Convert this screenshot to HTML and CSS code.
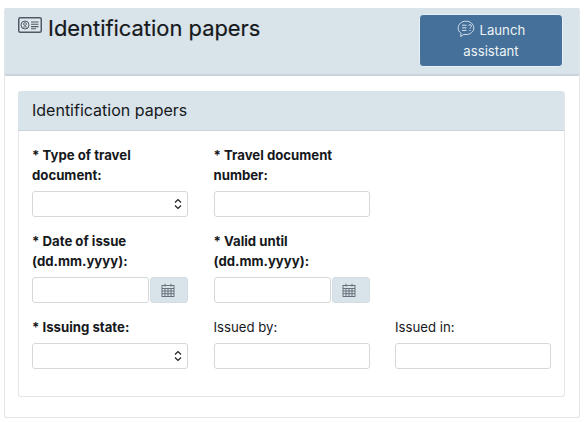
FILE: index.html
```html
<!DOCTYPE html>
<html lang="en">
<head>
  <meta charset="UTF-8" />
  <title>Identification papers</title>
  <link rel="stylesheet" href="styles.css">
</head>
<body>
  <div class="page-card">
    <div class="page-header">
      <h1>
        <svg class="id-icon" viewBox="0 0 24 16" width="24" height="16" fill="none" stroke="#4f5a66">
          <rect x="0.75" y="0.75" width="22.5" height="14.5" rx="1.5" stroke-width="1.5" fill="#dfe7ed"/>
          <circle cx="7" cy="8" r="4" stroke-width="1"/>
          <circle cx="7" cy="7" r="1.4" stroke-width="0.9"/>
          <path d="M4.5 10.8c.6-1.400 4.400-1.400 5 0" stroke-width="0.9"/>
          <path d="M13 5h7.500M13 7.300h7.500M13 9.600h7.500M13 11.800h5" stroke-width="1.100"/>
        </svg>
        Identification papers
      </h1>
      <button class="assistant-btn" type="button">
        <svg class="chat-icon" viewBox="0 0 18 18" width="18" height="18" fill="none" stroke="#d5e2ec" stroke-width="1">
          <path d="M9 1.200c4.300 0 7.800 2.900 7.800 6.700S13.300 14.600 9 14.600c-.8 0-1.500-.1-2.200-.3L3.700 16.600l.4-3.300C2.200 12.100 1.200 10.100 1.200 7.900 1.200 4.100 4.700 1.200 9 1.200z"/>
          <path d="M5 5.200h4.500M5 7.800h4.500M5 10.400h4.500"/>
          <path d="M11.500 5.800c.2-1.500 3-1.500 3 .2 0 1.200-1.500 1.200-1.500 2.600M13 10v1"/>
        </svg>
        Launch assistant
      </button>
    </div>

    <div class="section-card">
      <h2 class="section-title">Identification papers</h2>
      <form class="form-grid">
        <div class="field">
          <label class="required">* Type of travel document:</label>
          <div class="select-box">
            <svg viewBox="0 0 8 12" width="8" height="12" fill="none" stroke="#222" stroke-width="1.200"><path d="M1 4.500 4 1.500l3 3M1 7.500l3 3 3-3"/></svg>
          </div>
        </div>
        <div class="field">
          <label class="required">* Travel document number:</label>
          <input type="text" />
        </div>
        <div class="field"></div>

        <div class="field">
          <label class="required">* Date of issue (dd.mm.yyyy):</label>
          <div class="date-group">
            <input type="text" />
            <span class="date-btn">
              <svg viewBox="0 0 14 14" width="14" height="14" fill="none" stroke="#5b6670" stroke-width="0.900"><rect x="1" y="2.500" width="12" height="11"/><path d="M1 5.500h12M1 8h12M1 10.700h12M4 5.500v8M7 5.500v8M10 5.500v8M4 .8v2.700M10 .8v2.700"/></svg>
            </span>
          </div>
        </div>
        <div class="field">
          <label class="required">* Valid until (dd.mm.yyyy):</label>
          <div class="date-group">
            <input type="text" />
            <span class="date-btn">
              <svg viewBox="0 0 14 14" width="14" height="14" fill="none" stroke="#5b6670" stroke-width="0.900"><rect x="1" y="2.500" width="12" height="11"/><path d="M1 5.500h12M1 8h12M1 10.700h12M4 5.500v8M7 5.500v8M10 5.500v8M4 .8v2.700M10 .8v2.700"/></svg>
            </span>
          </div>
        </div>
        <div class="field"></div>

        <div class="field">
          <label class="required">* Issuing state:</label>
          <div class="select-box">
            <svg viewBox="0 0 8 12" width="8" height="12" fill="none" stroke="#222" stroke-width="1.200"><path d="M1 4.500 4 1.500l3 3M1 7.500l3 3 3-3"/></svg>
          </div>
        </div>
        <div class="field">
          <label>Issued by:</label>
          <input type="text" />
        </div>
        <div class="field">
          <label>Issued in:</label>
          <input type="text" />
        </div>
      </form>
    </div>
  </div>
</body>
</html>
```

FILE: styles.css
```css
body {
  margin: 0;
  padding: 8px 6px 0 4px;
  background-color: #fff;
  font-family: "Inter", "Liberation Sans", sans-serif;
  color: #16191c;
  overflow: hidden;
}
.page-card {
  border: 1px solid #e3e6e8;
  border-top: 0;
  border-radius: 3px;
  padding-bottom: 20px;
}
.page-header {
  display: flex;
  justify-content: space-between;
  align-items: flex-start;
  height: 68px;
  box-sizing: border-box;
  padding: 6px 16px 0 13px;
  background-color: #d9e3ea;
  border-bottom: 2px solid #cbd4da;
}
.page-header h1 {
  display: flex;
  align-items: flex-start;
  gap: 6px;
  margin: 0;
  font-size: 21.900px;
  font-weight: 400;
  line-height: 28px;
  -webkit-text-stroke: 0.2px #16191c;
}
.id-icon {
  margin-top: 3px;
}
.assistant-btn {
  width: 144px;
  height: 53px;
  padding: 0 20px;
  background-color: #44709a;
  border: 1px solid #e6f2f8;
  border-radius: 4px;
  color: #eef3f7;
  font-family: inherit;
  font-size: 13.200px;
  line-height: 21px;
  text-align: center;
}
.chat-icon {
  vertical-align: -3px;
  margin-right: 1px;
}
.section-card {
  margin: 15px 14px 0 13px;
  border: 1px solid #e3e6e8;
  border-top: 0;
  border-radius: 3px;
  padding-bottom: 27px;
}
.section-title {
  margin: 0 0 0 -1px;
  height: 40px;
  box-sizing: border-box;
  padding: 0 14px;
  background-color: #d9e3ea;
  border-bottom: 1px solid #cbd4da;
  border-radius: 3px 3px 0 0;
  font-size: 16px;
  font-weight: 400;
  line-height: 38px;
}
.form-grid {
  display: grid;
  grid-template-columns: 156px 156px 156px;
  column-gap: 25.500px;
  row-gap: 14px;
  padding: 14px 13px 0 13px;
}
.field {
  display: flex;
  flex-direction: column;
  justify-content: flex-end;
}
.field label {
  display: block;
  margin-bottom: 6px;
  font-size: 13.200px;
  line-height: 20px;
}
.field label.required {
  font-weight: 700;
}
.field input {
  width: 100%;
  height: 26px;
  box-sizing: border-box;
  padding: 0 8px;
  background: #fff;
  border: 1px solid #d5d8db;
  border-radius: 3px;
}
.select-box {
  display: flex;
  justify-content: flex-end;
  align-items: center;
  height: 26px;
  box-sizing: border-box;
  padding-right: 5px;
  border: 1px solid #d5d8db;
  border-radius: 3px;
  background: #fff;
}
.date-group {
  display: flex;
  gap: 1px;
}
.date-group input {
  flex: 1;
  min-width: 0;
}
.date-btn {
  display: flex;
  justify-content: center;
  align-items: center;
  width: 38px;
  height: 26px;
  box-sizing: border-box;
  padding-right: 3px;
  background-color: #d9e3ea;
  border: 1px solid #d3dde4;
  border-radius: 3px;
}
```
